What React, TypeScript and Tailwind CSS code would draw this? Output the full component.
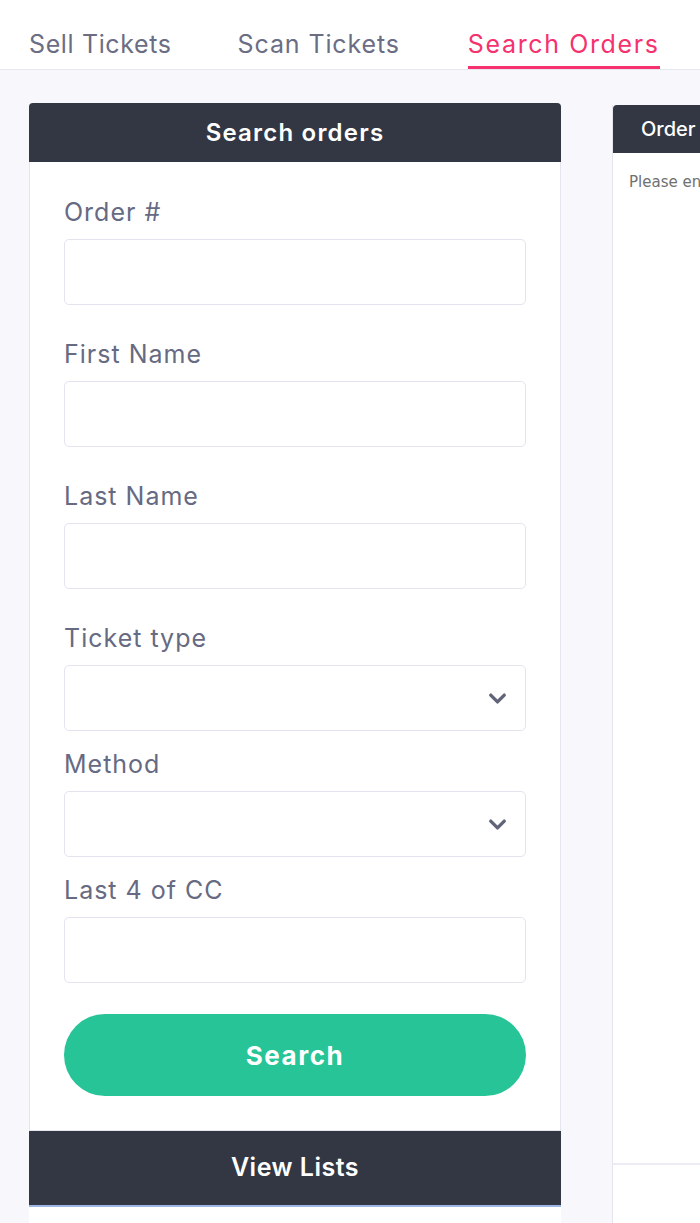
import { ChevronDown } from "lucide-react";

const font = { fontFamily: "Inter, 'Open Sans', sans-serif" };

type Field = { label: string; select?: boolean };

const fields: Field[] = [
  { label: "Order #" },
  { label: "First Name" },
  { label: "Last Name" },
  { label: "Ticket type", select: true },
  { label: "Method", select: true },
  { label: "Last 4 of CC" },
];

function FormField({ label, select }: Field) {
  return (
    <div className={select ? "mb-[15px]" : "mb-[31px]"}>
      <label className="mb-[9px] block text-[25px] leading-[36px] tracking-[0.04em] text-[#666a82]">{label}</label>
      <div className="relative flex h-[66px] items-center rounded-[5px] border border-[#e4e4f1] bg-white">
        {select && (
          <ChevronDown className="absolute right-[14px] h-[27px] w-[27px] text-[#62657a]" strokeWidth={3} />
        )}
      </div>
    </div>
  );
}

export default function App() {
  return (
    <div className="h-[1223px] w-[700px] overflow-hidden bg-[#f8f8fc]" style={font}>
      {/* Tabs */}
      <nav className="flex h-[70px] items-end border-b border-[#e7e7f0] bg-white pl-[29px]">
        <span className="pb-[7px] text-[25px] leading-[36px] tracking-[0.025em] text-[#6b6d84]">Sell Tickets</span>
        <span className="ml-[66px] pb-[7px] text-[25px] leading-[36px] tracking-[0.035em] text-[#6b6d84]">Scan Tickets</span>
        <span className="ml-[68px] border-b-[3px] border-[#f5326e] pb-[4px] text-[25px] leading-[36px] tracking-[0.065em] text-[#f5326e]">
          Search Orders
        </span>
      </nav>

      <div className="flex pt-[33px]">
        {/* Left column */}
        <div className="ml-[29px] w-[532px] shrink-0">
          <div className="flex h-[59px] items-center justify-center rounded-t-[4px] bg-[#323743] text-[24px] font-semibold tracking-[0.05em] text-white">
            Search orders
          </div>
          <div className="border-x border-b border-[#e5e5f0] bg-white px-[34px] pt-[32px] pb-[34px]">
            {fields.map((f) => (
              <FormField key={f.label} {...f} />
            ))}
            <button
              type="button"
              className="mt-[15px] flex h-[82px] w-full items-center justify-center rounded-full bg-[#26c496] text-[26px] font-bold tracking-[0.06em] text-white"
            >
              Search
            </button>
          </div>
          <div className="flex h-[76px] items-center justify-center border-b-2 border-[#9db6e6] bg-[#323743] text-[25px] font-semibold tracking-[0.02em] text-white">
            View Lists
          </div>
          <div className="h-[40px] bg-white" />
        </div>

        {/* Right column */}
        <div className="ml-[51px] mt-[2px] flex h-[1200px] w-[300px] shrink-0 flex-col border-l border-[#e5e5f0] bg-white">
          <div className="flex h-[48px] items-center rounded-tl-[4px] bg-[#323743] pl-[28px] text-[20px] font-medium text-white">
            Order Details
          </div>
          <div className="h-[1012px] border-b-2 border-[#ececf4] pl-[16px] pt-[18px]">
            <p className="text-[15px] text-[#707070]" style={{ fontFamily: "'DejaVu Sans', Verdana, sans-serif" }}>
              Please enter search criteria
            </p>
          </div>
        </div>
      </div>
    </div>
  );
}
